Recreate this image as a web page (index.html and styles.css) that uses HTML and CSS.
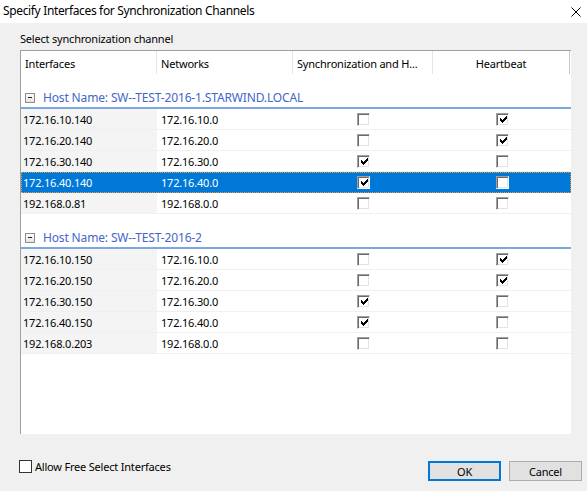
FILE: index.html
```html
<!DOCTYPE html>
<html lang="en">
<head>
<meta charset="utf-8">
<title>Specify Interfaces for Synchronization Channels</title>
<link rel="stylesheet" href="styles.css">
</head>
<body>
<div class="dialog">
  <div class="titlebar">
    <span class="title">Specify Interfaces for Synchronization Channels</span>
    <svg class="close" width="10" height="10" viewBox="0 0 10 10"><path d="M0.5 0.5 L9.5 9.5 M9.5 0.5 L0.5 9.5" stroke="#000" stroke-width="1" fill="none"/></svg>
  </div>

  <div class="content">
    <div class="section-label">Select synchronization channel</div>

    <div class="grid">
      <div class="grid-head">
        <div class="hcell">Interfaces</div>
        <div class="hcell">Networks</div>
        <div class="hcell">Synchronization and H...</div>
        <div class="hcell center">Heartbeat</div>
      </div>

      <div class="group">
        <div class="group-head"><span class="toggle"></span><span>Host Name: SW--TEST-2016-1.STARWIND.LOCAL</span></div>
        <div class="row">
          <div class="cell first">172.16.10.140</div><div class="cell">172.16.10.0</div>
          <div class="cell box"><span class="chk"></span></div>
          <div class="cell box"><span class="chk on"></span></div>
        </div>
        <div class="row">
          <div class="cell first">172.16.20.140</div><div class="cell">172.16.20.0</div>
          <div class="cell box"><span class="chk"></span></div>
          <div class="cell box"><span class="chk on"></span></div>
        </div>
        <div class="row">
          <div class="cell first">172.16.30.140</div><div class="cell">172.16.30.0</div>
          <div class="cell box"><span class="chk on"></span></div>
          <div class="cell box"><span class="chk"></span></div>
        </div>
        <div class="row selected">
          <div class="cell first">172.16.40.140</div><div class="cell">172.16.40.0</div>
          <div class="cell box"><span class="chk on"></span></div>
          <div class="cell box"><span class="chk"></span></div>
        </div>
        <div class="row">
          <div class="cell first">192.168.0.81</div><div class="cell">192.168.0.0</div>
          <div class="cell box"><span class="chk"></span></div>
          <div class="cell box"><span class="chk"></span></div>
        </div>
      </div>

      <div class="group">
        <div class="group-head"><span class="toggle"></span><span>Host Name: SW--TEST-2016-2</span></div>
        <div class="row">
          <div class="cell first">172.16.10.150</div><div class="cell">172.16.10.0</div>
          <div class="cell box"><span class="chk"></span></div>
          <div class="cell box"><span class="chk on"></span></div>
        </div>
        <div class="row">
          <div class="cell first">172.16.20.150</div><div class="cell">172.16.20.0</div>
          <div class="cell box"><span class="chk"></span></div>
          <div class="cell box"><span class="chk on"></span></div>
        </div>
        <div class="row">
          <div class="cell first">172.16.30.150</div><div class="cell">172.16.30.0</div>
          <div class="cell box"><span class="chk on"></span></div>
          <div class="cell box"><span class="chk"></span></div>
        </div>
        <div class="row">
          <div class="cell first">172.16.40.150</div><div class="cell">172.16.40.0</div>
          <div class="cell box"><span class="chk on"></span></div>
          <div class="cell box"><span class="chk"></span></div>
        </div>
        <div class="row">
          <div class="cell first">192.168.0.203</div><div class="cell">192.168.0.0</div>
          <div class="cell box"><span class="chk"></span></div>
          <div class="cell box"><span class="chk"></span></div>
        </div>
      </div>
    </div>
  </div>

  <div class="footer">
    <label class="free-select"><span class="flat-box"></span>Allow Free Select Interfaces</label>
    <div class="buttons">
      <button class="btn default">OK</button>
      <button class="btn">Cancel</button>
    </div>
  </div>
</div>
</body>
</html>
```

FILE: styles.css
```css
* { box-sizing: border-box; }

html, body {
  margin: 0;
  padding: 0;
}

body {
  width: 587px;
  height: 491px;
  overflow: hidden;
  background: #f0f0f0;
  font-family: "Noto Sans", "Open Sans", sans-serif;
  font-size: 11px;
  letter-spacing: -0.2px;
  color: #000;
}

.dialog {
  display: flex;
  flex-direction: column;
  height: 491px;
}

/* window caption */
.titlebar {
  height: 23px;
  background: #fff;
  display: flex;
  align-items: center;
  justify-content: space-between;
  padding: 0 6px 2px 3px;
  font-size: 12px;
  letter-spacing: -0.35px;
}

.title {
  line-height: 16px;
}

.close {
  display: block;
  margin-top: 2px;
}

.content {
  padding-left: 20px;
}

.section-label {
  padding-top: 8px;
  line-height: 15px;
  height: 27px;
}

/* list view */
.grid {
  width: 551px;
  height: 384px;
  background: #fff;
  border-top: 1px solid #a0a0a0;
  border-left: 1px solid #a0a0a0;
}

.grid-head,
.row {
  display: grid;
  grid-template-columns: 136px 136px 140px 138px;
}

.grid-head {
  height: 23px;
}

.hcell {
  border-right: 1px solid #e5e5e5;
  padding: 1px 0 0 4px;
  display: flex;
  align-items: center;
  white-space: nowrap;
  overflow: hidden;
}

.hcell:last-child {
  border-right-color: #c8c8c8;
  width: 137px;
}

.hcell.center {
  justify-content: center;
  padding-left: 0;
}

.group-head {
  height: 35px;
  border-bottom: 2px solid #7ea7e2;
  display: flex;
  align-items: flex-end;
  padding: 0 0 1px 4px;
  color: #4466c8;
  line-height: 16px;
  font-size: 12px;
  letter-spacing: -0.15px;
}

.toggle {
  width: 10px;
  height: 10px;
  border: 1px solid #8d8d8d;
  background: linear-gradient(#fdfdfd, #e4e4e4);
  margin: 0 8px 3px 0;
  position: relative;
}

.toggle::after {
  content: "";
  position: absolute;
  left: 2px;
  top: 3px;
  width: 4px;
  height: 1px;
  background: #202020;
}

.row {
  height: 21px;
  border-bottom: 1px solid #f0f0f0;
}

.cell {
  display: flex;
  align-items: center;
  padding-left: 4px;
  white-space: nowrap;
}

.cell.first {
  background: #f4f4f4;
  padding-left: 2px;
}

.cell.box {
  justify-content: center;
  padding-left: 0;
}

.row.selected {
  background: #0078d7;
  color: #fff;
  border: 1px dotted #f29b2e;
}

.row.selected .cell.first {
  background: transparent;
  padding-left: 1px;
}

.row.selected .cell:nth-child(2) {
  padding-left: 3px;
}

/* classic sunken check box */
.chk {
  width: 13px;
  height: 13px;
  background: #fff;
  border-top: 1px solid #a0a0a0;
  border-left: 1px solid #a0a0a0;
  border-right: 1px solid #fff;
  border-bottom: 1px solid #fff;
  box-shadow: inset 1px 1px 0 #696969, inset -1px -1px 0 #e3e3e3;
  position: relative;
}

.row.selected .chk {
  margin-right: 1px;
}

.chk.on::after {
  content: "";
  position: absolute;
  left: 3px;
  top: 2px;
  width: 7px;
  height: 7px;
  background: linear-gradient(#000, #000) 0 2px / 1px 3px no-repeat,
              linear-gradient(#000, #000) 1px 3px / 1px 3px no-repeat,
              linear-gradient(#000, #000) 2px 4px / 1px 3px no-repeat,
              linear-gradient(#000, #000) 3px 3px / 1px 3px no-repeat,
              linear-gradient(#000, #000) 4px 2px / 1px 3px no-repeat,
              linear-gradient(#000, #000) 5px 1px / 1px 3px no-repeat,
              linear-gradient(#000, #000) 6px 0 / 1px 3px no-repeat;
}

/* bottom area */
.footer {
  flex: 1;
  display: flex;
  justify-content: space-between;
  align-items: flex-start;
  padding: 26px 5px 0 19px;
}

.free-select {
  display: flex;
  align-items: center;
  line-height: 13px;
}

.flat-box {
  width: 13px;
  height: 13px;
  border: 1px solid #333;
  background: #fff;
  margin-right: 3px;
}

.buttons {
  display: flex;
  gap: 8px;
  margin-top: 1px;
}

.btn {
  width: 73px;
  height: 20px;
  background: #e1e1e1;
  border: 1px solid #adadad;
  font: inherit;
  letter-spacing: inherit;
  color: #000;
  padding: 1px 0 0;
  line-height: 16px;
}

.btn.default {
  border: 2px solid #0078d7;
}
```
